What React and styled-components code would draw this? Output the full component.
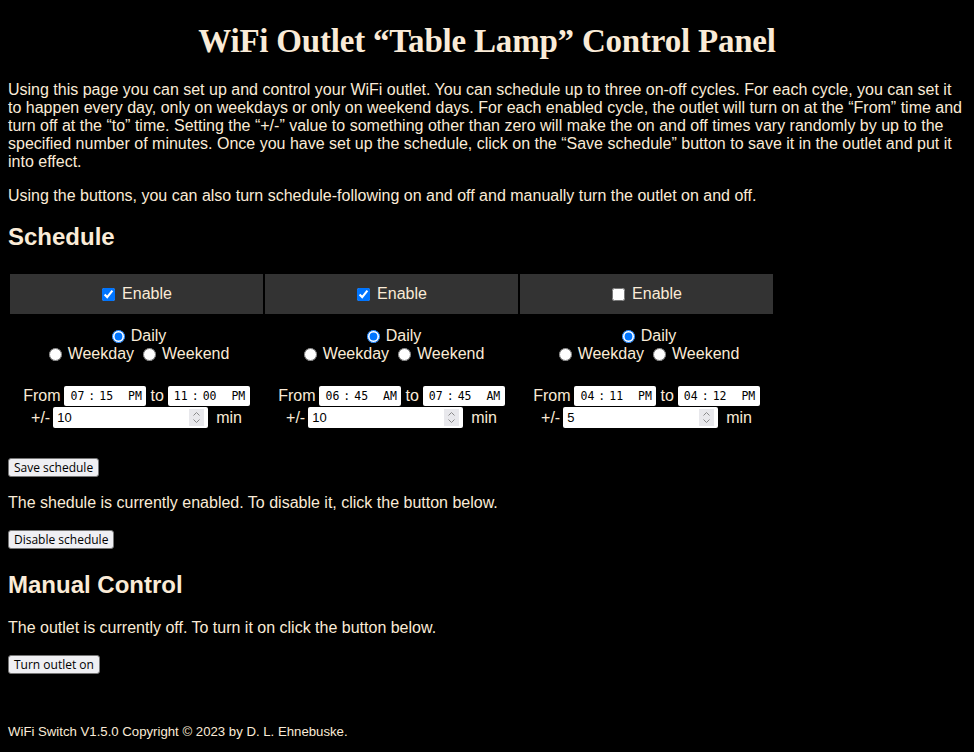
import React from "react";
import styled, { createGlobalStyle } from "styled-components";

const Global = createGlobalStyle`
  html, body { margin: 0; padding: 0; background: #000; }
  body {
    padding: 8px;
    color: #faebd7;
    font-family: "Liberation Sans", Arial, sans-serif;
    font-size: 16px;
  }
`;

const Page = styled.div`
  display: flex;
  flex-direction: column;
`;

const Title = styled.h1`
  margin: 15px 0 21px;
  text-align: center;
  font-family: "Liberation Serif", "Times New Roman", serif;
  font-size: 33px;
  font-weight: bold;
  color: #faebd7;
  letter-spacing: -0.2px;
`;

const Para = styled.p`
  margin: ${(p) => p.$mt ?? 0}px 0 ${(p) => p.$mb ?? 16}px;
  line-height: normal;
`;

const Heading = styled.h2`
  margin: ${(p) => p.$mt ?? 18}px 0 ${(p) => p.$mb ?? 20}px;
  font-size: 24px;
  font-weight: bold;
  line-height: 28px;
`;

const Grid = styled.div`
  display: grid;
  grid-template-columns: repeat(3, 253px);
  column-gap: 2px;
  padding: 0 2px;
`;

const HeadCell = styled.label`
  height: 40px;
  background: #333333;
  display: flex;
  align-items: center;
  justify-content: center;
  gap: 7px;
  margin-top: 1px;
  input { margin: 0 0 0 1px; width: 13px; height: 13px; }
`;

const Cell = styled.div`
  display: flex;
  flex-direction: column;
  align-items: center;
  padding-top: 13px;
`;

const RadioLine = styled.div`
  display: flex;
  align-items: center;
  line-height: 18px;
  gap: 4px;
  label { display: flex; align-items: center; }
  input { margin: 0 6px 0 5px; width: 13px; height: 13px; }
`;

const TimeRow = styled.div`
  margin-top: 22px;
  display: flex;
  align-items: center;
  gap: 4px;
  height: 21px;
`;

const PlusRow = styled.div`
  display: flex;
  align-items: center;
  height: 23px;
`;

const PlusLabel = styled.span`
  margin-right: 3px;
`;

const MinLabel = styled.span`
  margin-left: 8px;
`;

const TimeInput = styled.input`
  font-family: "DejaVu Sans Mono", "Liberation Mono", monospace;
  font-size: 11.5px;
  width: 82px;
  height: 20px;
  box-sizing: border-box;
  border: none;
  border-radius: 2px;
  background: #fff;
  color: #000;
  padding: 0 2px 0 5px;
  &::-webkit-calendar-picker-indicator { display: none; }
  &::-webkit-datetime-edit-fields-wrapper { padding: 0; }
  &::-webkit-datetime-edit-text { padding: 0 3px; }
`;

const NumberWrap = styled.div`
  position: relative;
  width: 155px;
  height: 21px;
`;

const NumberInput = styled.input`
  width: 155px;
  height: 21px;
  box-sizing: border-box;
  border: none;
  border-radius: 2px;
  background: #fff;
  color: #000;
  font-family: "Liberation Sans", Arial, sans-serif;
  font-size: 13px;
  padding: 0 4px;
  &::-webkit-inner-spin-button, &::-webkit-outer-spin-button { -webkit-appearance: none; margin: 0; }
`;

const Spinner = styled.svg`
  position: absolute;
  right: 4px;
  top: 2px;
  width: 15px;
  height: 17px;
  pointer-events: none;
`;

const Button = styled.button`
  align-self: flex-start;
  font-family: "Open Sans", "DejaVu Sans", sans-serif;
  font-size: 12px;
  line-height: 15px;
  padding: 1px 5px;
  background: #efeff3;
  color: #000;
  border: 1px solid #767676;
  border-radius: 3px;
  margin-top: ${(p) => p.$mt ?? 0}px;
`;

const Footer = styled.div`
  margin-top: 50px;
  font-size: 13.2px;
  line-height: 15px;
`;

const cycles = [
  { on: true, from: "19:15", to: "23:00", pm: 10 },
  { on: true, from: "06:45", to: "07:45", pm: 10 },
  { on: false, from: "16:11", to: "16:12", pm: 5 },
];

function SpinIcon() {
  return (
    <Spinner viewBox="0 0 15 17">
      <rect x="0" y="0" width="15" height="17" fill="#e8e8ec" />
      <path d="M4.5 6.5 L7.5 3.5 L10.5 6.5" fill="none" stroke="#8a8a8a" strokeWidth="1" />
      <path d="M4.5 10.5 L7.5 13.5 L10.5 10.5" fill="none" stroke="#8a8a8a" strokeWidth="1" />
    </Spinner>
  );
}

export default function App() {
  return (
    <Page>
      <Global />
      <Title>WiFi Outlet “Table Lamp” Control Panel</Title>
      <Para>
        Using this page you can set up and control your WiFi outlet. You can schedule up to three on-off cycles. For each cycle, you can set it to happen every day, only on weekdays or only on weekend days. For each enabled cycle, the outlet will turn on at the “From” time and turn off at the “to” time. Setting the “+/-” value to something other than zero will make the on and off times vary randomly by up to the specified number of minutes. Once you have set up the schedule, click on the “Save schedule” button to save it in the outlet and put it into effect.
      </Para>
      <Para $mb={0}>
        Using the buttons, you can also turn schedule-following on and off and manually turn the outlet on and off.
      </Para>
      <Heading $mb={22}>Schedule</Heading>
      <Grid>
        {cycles.map((c, i) => (
          <HeadCell key={"h" + i}>
            <input type="checkbox" defaultChecked={c.on} />
            Enable
          </HeadCell>
        ))}
        {cycles.map((c, i) => (
          <Cell key={"c" + i}>
            <RadioLine>
              <label><input type="radio" name={"d" + i} defaultChecked />Daily</label>
            </RadioLine>
            <RadioLine>
              <label><input type="radio" name={"d" + i} />Weekday</label>
              <label><input type="radio" name={"d" + i} />Weekend</label>
            </RadioLine>
            <TimeRow>
              From <TimeInput type="time" defaultValue={c.from} /> to <TimeInput type="time" defaultValue={c.to} />
            </TimeRow>
            <PlusRow>
              <PlusLabel>+/-</PlusLabel>
              <NumberWrap>
                <NumberInput type="number" defaultValue={c.pm} />
                <SpinIcon />
              </NumberWrap>
              <MinLabel>min</MinLabel>
            </PlusRow>
          </Cell>
        ))}
      </Grid>
      <Button $mt={29}>Save schedule</Button>
      <Para $mt={17} $mb={0}>The shedule is currently enabled. To disable it, click the button below.</Para>
      <Button $mt={18}>Disable schedule</Button>
      <Heading $mt={22}>Manual Control</Heading>
      <Para $mb={0}>The outlet is currently off. To turn it on click the button below.</Para>
      <Button $mt={18}>Turn outlet on</Button>
      <Footer>WiFi Switch V1.5.0 Copyright © 2023 by D. L. Ehnebuske.</Footer>
    </Page>
  );
}
